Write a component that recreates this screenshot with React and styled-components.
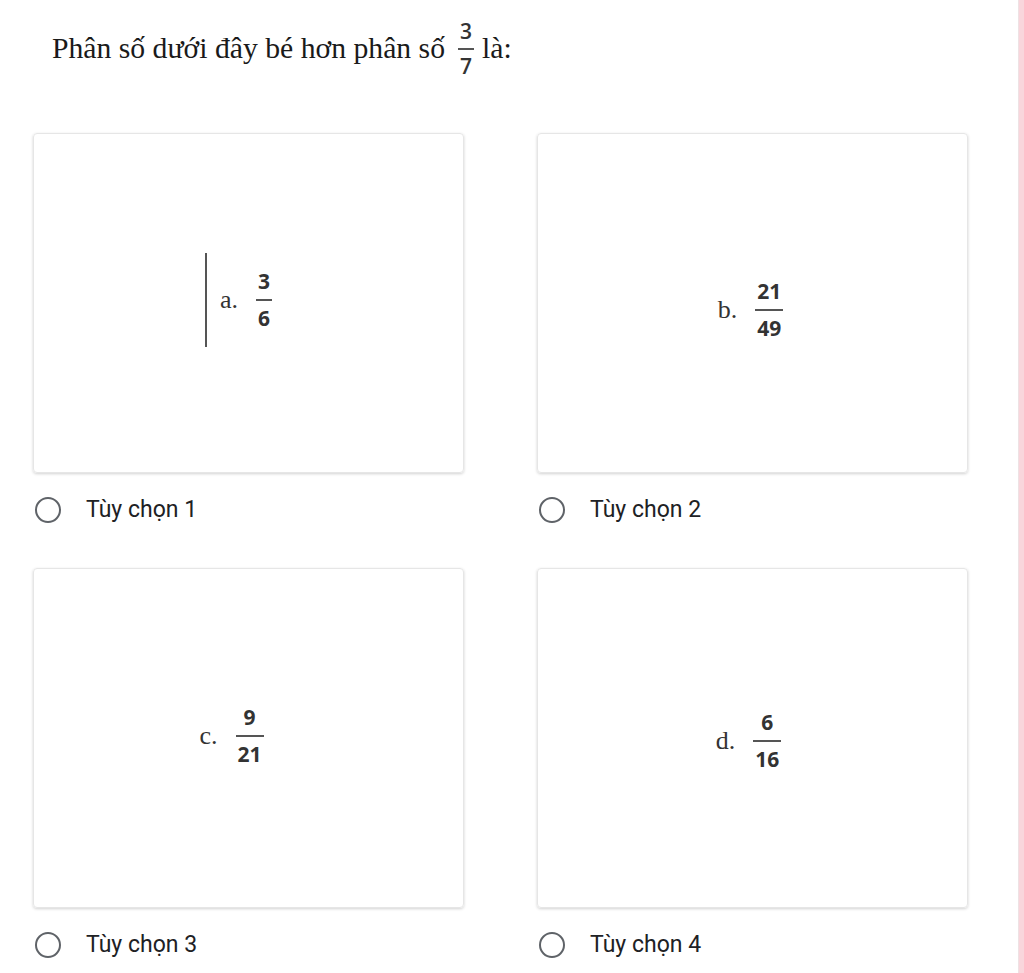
import React from "react";
import styled, { createGlobalStyle } from "styled-components";

const Global = createGlobalStyle`
  html, body { margin: 0; padding: 0; background: #fff; }
  body { font-family: "Liberation Sans", Arial, sans-serif; }
`;

const Page = styled.div`
  display: flex;
  width: 1024px;
  min-height: 973px;
`;

const Main = styled.div`
  flex: 1;
  padding: 20px 0 0 33px;
  box-sizing: border-box;
`;

const Stripe = styled.div`
  width: 5px;
  background: #f9d6dc;
  border-left: 1px solid #eee2e4;
`;

const Title = styled.div`
  display: flex;
  align-items: center;
  padding-left: 19px;
  height: 56px;
  font-family: "Liberation Serif", "Times New Roman", serif;
  font-size: 29.7px;
  color: #1a1a1a;
  margin-bottom: 57px;
`;

const TitleFrac = styled.span`
  display: inline-flex;
  margin: 2px 8px 0 13px;
`;

const Frac = styled.span`
  display: inline-flex;
  flex-direction: column;
  align-items: center;
  font-family: "Open Sans", "Noto Sans", sans-serif;
  font-weight: ${(p) => (p.$bold ? 700 : 600)};
  font-size: ${(p) => p.$size}px;
  line-height: 1;
  color: #333;
`;

const Num = styled.span`
  padding: 0 2px ${(p) => p.$gap}px;
`;

const Den = styled.span`
  align-self: stretch;
  text-align: center;
  border-top: 2px solid #555;
  padding: ${(p) => p.$gap}px 2px 0;
`;

const Grid = styled.div`
  display: grid;
  grid-template-columns: 431px 431px;
  column-gap: 73px;
`;

const Cell = styled.div`
  display: flex;
  flex-direction: column;
`;

const Card = styled.div`
  height: 340px;
  box-sizing: border-box;
  border: 1px solid #e6e6e6;
  border-radius: 4px;
  box-shadow: 0 1px 3px rgba(0, 0, 0, 0.18);
  display: flex;
  align-items: center;
  justify-content: center;
`;

const Content = styled.div`
  display: flex;
  align-items: center;
  gap: 18px;
  transform: translate(${(p) => p.$dx}px, ${(p) => p.$dy}px);
`;

const Caret = styled.span`
  width: 2px;
  height: 94px;
  background: #555;
  margin-right: -5px;
`;

const Letter = styled.span`
  font-family: "Liberation Serif", "Times New Roman", serif;
  font-size: 26px;
  color: #333;
`;

const Option = styled.label`
  display: flex;
  align-items: center;
  gap: 25px;
  padding: 23px 0 45px 2px;
  font-family: Roboto, "Liberation Sans", sans-serif;
  font-size: 23px;
  color: #202124;
`;

const Radio = styled.span`
  width: 22px;
  height: 22px;
  border: 2px solid #5f6368;
  border-radius: 50%;
`;

const options = [
  { l: "a.", n: "3", d: "6", caret: true, dx: -10, dy: -3 },
  { l: "b.", n: "21", d: "49", dx: -2, dy: 7 },
  { l: "c.", n: "9", d: "21", dx: -17, dy: -2 },
  { l: "d.", n: "6", d: "16", dx: -4, dy: 3 },
];

export default function App() {
  return (
    <Page>
      <Global />
      <Main>
        <Title>
          <span>Phân số dưới đây bé hơn phân số</span>
          <TitleFrac>
            <Frac $size={21}>
              <Num $gap={6}>3</Num>
              <Den $gap={6}>7</Den>
            </Frac>
          </TitleFrac>
          <span>là:</span>
        </Title>
        <Grid>
          {options.map((o, i) => (
            <Cell key={i}>
              <Card>
                <Content $dx={o.dx} $dy={o.dy}>
                  {o.caret && <Caret />}
                  <Letter>{o.l}</Letter>
                  <Frac $size={21} $bold>
                    <Num $gap={7}>{o.n}</Num>
                    <Den $gap={7}>{o.d}</Den>
                  </Frac>
                </Content>
              </Card>
              <Option>
                <Radio />
                <span>Tùy chọn {i + 1}</span>
              </Option>
            </Cell>
          ))}
        </Grid>
      </Main>
      <Stripe />
    </Page>
  );
}
